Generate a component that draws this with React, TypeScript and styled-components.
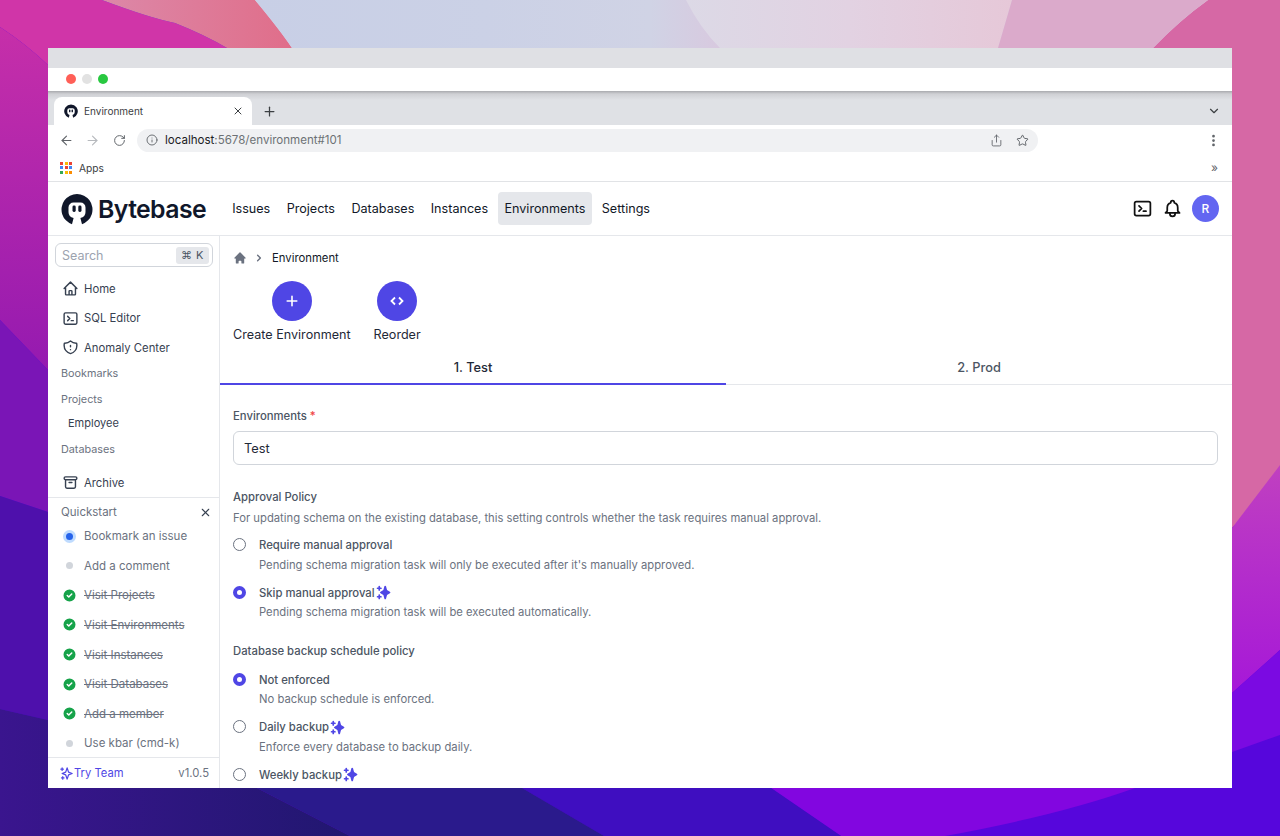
import styled, { createGlobalStyle } from "styled-components";
import {
  ArrowLeft,
  ArrowRight,
  ChevronDown,
  EllipsisVertical,
  Info,
  Plus,
  RotateCw,
  Share,
  Star,
  X,
} from "lucide-react";
import {
  HiCheckCircle,
  HiChevronRight,
  HiHome,
  HiOutlineArchive,
  HiOutlineBell,
  HiOutlineHome,
  HiOutlineShieldExclamation,
  HiOutlineSparkles,
  HiOutlineTerminal,
  HiPlus,
  HiSparkles,
} from "react-icons/hi";

const GlobalStyle = createGlobalStyle`
  html, body {
    margin: 0;
    padding: 0;
    background: #3a1590;
  }
  * {
    box-sizing: border-box;
  }
  body {
    font-family: Inter, "Noto Sans", sans-serif;
    -webkit-font-smoothing: antialiased;
  }
`;

const Wallpaper = () => (
  <WallpaperSvg viewBox="0 0 1280 836" preserveAspectRatio="none">
    <defs>
      <linearGradient id="sky" x1="0" y1="0" x2="1" y2="0">
        <stop offset="0" stopColor="#c8cfe6" />
        <stop offset="0.5" stopColor="#cbd1e6" />
        <stop offset="0.85" stopColor="#d0d3e5" />
        <stop offset="1" stopColor="#d8c9df" />
      </linearGradient>
      <linearGradient id="lilac" x1="0" y1="0" x2="1" y2="0">
        <stop offset="0" stopColor="#dcd9e6" />
        <stop offset="0.5" stopColor="#e2d2e2" />
        <stop offset="1" stopColor="#e6c8d8" />
      </linearGradient>
      <linearGradient id="salmon" x1="0" y1="0" x2="1" y2="0">
        <stop offset="0" stopColor="#dc88a8" />
        <stop offset="1" stopColor="#e06e8a" />
      </linearGradient>
      <linearGradient id="leftTop" x1="0" y1="0" x2="0" y2="1">
        <stop offset="0" stopColor="#c62fa9" />
        <stop offset="1" stopColor="#951ab0" />
      </linearGradient>
      <linearGradient id="bottomLeft" x1="0" y1="0" x2="1" y2="0">
        <stop offset="0" stopColor="#3a158e" />
        <stop offset="1" stopColor="#211770" />
      </linearGradient>
      <linearGradient id="rightMag" x1="0" y1="0" x2="0" y2="1">
        <stop offset="0" stopColor="#c040c0" />
        <stop offset="1" stopColor="#a618d8" />
      </linearGradient>
    </defs>
    <rect width="1280" height="836" fill="#5606dc" />
    <rect x="250" width="970" height="48" fill="#d9cde2" />
    <path d="M1153 48Q1180 20 1208 0H1280V480L1232 528V48Z" fill="#d668a5" />
    <path d="M1232 528L1280 465V650L1232 693Z" fill="url(#rightMag)" />
    <path d="M1232 693L1280 650V735L1232 752Z" fill="#7b0ae2" />
    <path d="M771 788L841 836H945Q1060 815 1135 788Z" fill="#8206e0" />
    <path d="M522 788L604 836H841L771 788Z" fill="#3f0ec0" />
    <path d="M257 788L350 836H604L522 788Z" fill="#2a1a8c" />
    <path d="M0 27Q26 44 48 65V370L0 320Z" fill="url(#leftTop)" />
    <path d="M0 0H102Q150 18 175 23Q205 35 227 48H48V65Q26 44 0 27Z" fill="#d035a8" />
    <path d="M102 0H255Q280 30 292 48H227Q205 35 175 23Q150 18 102 0Z" fill="url(#salmon)" />
    <path d="M0 320L48 370V512L0 496Z" fill="#7a15b6" />
    <path d="M0 496L48 512V720L0 709Z" fill="#4e10ac" />
    <path d="M0 709L48 720V788H257L350 836H0Z" fill="url(#bottomLeft)" />
    <path d="M255 0H686Q700 28 720 48H292Q280 30 255 0Z" fill="url(#sky)" />
    <path d="M686 0H1012L998 48H720Q700 28 686 0Z" fill="url(#lilac)" />
    <path d="M1012 0H1208Q1180 20 1153 48H998Z" fill="#dbaacb" />
  </WallpaperSvg>
);

const Logo = ({ size, withText }: { size: number; withText?: boolean }) => (
  <LogoRow>
    <svg width={size} height={size} viewBox="0 0 32 32">
      <path
        d="M11 31.2A15.5 15.5 0 1 1 21 31.2L19.4 25A6 6 0 0 0 24.5 19V14.5A5 5 0 0 0 19.5 9.5H12.5A5 5 0 0 0 7.5 14.5V19A6 6 0 0 0 12.6 25Z"
        fill="#10172a"
      />
      <rect x="11.5" y="12.5" width="3.2" height="6.5" rx="1.4" fill="#10172a" />
      <rect x="17.3" y="12.5" width="3.2" height="6.5" rx="1.4" fill="#10172a" />
    </svg>
    {withText && <LogoText>Bytebase</LogoText>}
  </LogoRow>
);

const navItems = ["Issues", "Projects", "Databases", "Instances", "Environments", "Settings"];

const quickstart = [
  { label: "Bookmark an issue", state: "current" },
  { label: "Add a comment", state: "todo" },
  { label: "Visit Projects", state: "done" },
  { label: "Visit Environments", state: "done" },
  { label: "Visit Instances", state: "done" },
  { label: "Visit Databases", state: "done" },
  { label: "Add a member", state: "done" },
  { label: "Use kbar (cmd-k)", state: "todo" },
];

const appColors = ["#ea4335", "#fbbc05", "#ea4335", "#4285f4", "#ea4335", "#4285f4", "#34a853", "#fbbc05", "#fb8c00"];

const Option = ({
  title,
  hint,
  checked,
  premium,
}: {
  title: string;
  hint?: string;
  checked?: boolean;
  premium?: boolean;
}) => (
  <OptionRow>
    <Radio $checked={checked} />
    <div>
      <OptionTitle>
        {title}
        {premium && <Sparkle />}
      </OptionTitle>
      {hint && <OptionHint>{hint}</OptionHint>}
    </div>
  </OptionRow>
);

export default function App() {
  return (
    <Screen>
      <GlobalStyle />
      <Wallpaper />
      <Window>
        <TopStrip />
        <TitleBar>
          <Light $color="#ff5f57" />
          <Light $color="#e2e2e2" />
          <Light $color="#28c840" />
        </TitleBar>
        <TabStrip>
          <Tab>
            <Logo size={14} />
            <TabTitle>Environment</TabTitle>
            <X size={12} strokeWidth={2} color="#3c4043" />
          </Tab>
          <NewTab>
            <Plus size={15} strokeWidth={2} />
          </NewTab>
          <TabMenu>
            <ChevronDown size={14} strokeWidth={2} />
          </TabMenu>
        </TabStrip>
        <Toolbar>
          <ArrowLeft size={15} strokeWidth={1.8} color="#5f6368" />
          <ArrowRight size={15} strokeWidth={1.8} color="#b6b9bd" />
          <RotateCw size={13} strokeWidth={1.8} color="#5f6368" />
          <Omnibox>
            <Info size={12} strokeWidth={1.8} color="#5f6368" />
            <Url>
              <strong>localhost</strong>:5678/environment#101
            </Url>
            <OmniIcons>
              <Share size={13} strokeWidth={1.6} color="#5f6368" />
              <Star size={13} strokeWidth={1.8} color="#5f6368" />
            </OmniIcons>
          </Omnibox>
          <EllipsisVertical size={15} strokeWidth={2.4} color="#5f6368" />
        </Toolbar>
        <BookmarksBar>
          <AppsGrid>
            {appColors.map((c, i) => (
              <AppsDot key={i} $color={c} />
            ))}
          </AppsGrid>
          <AppsLabel>Apps</AppsLabel>
          <More>»</More>
        </BookmarksBar>

        <Header>
          <Logo size={32} withText />
          <Nav>
            {navItems.map((item) => (
              <NavItem key={item} $active={item === "Environments"}>
                {item}
              </NavItem>
            ))}
          </Nav>
          <HeaderRight>
            <HiOutlineTerminal size={21} color="#111" />
            <HiOutlineBell size={21} color="#111" />
            <Avatar>R</Avatar>
          </HeaderRight>
        </Header>

        <Body>
          <Sidebar>
            <SideTop>
              <SearchBox>
                Search
                <Kbd>⌘ K</Kbd>
              </SearchBox>
              <SideLink>
                <HiOutlineHome size={17} />
                Home
              </SideLink>
              <SideLink>
                <HiOutlineTerminal size={17} />
                SQL Editor
              </SideLink>
              <SideLink>
                <HiOutlineShieldExclamation size={17} />
                Anomaly Center
              </SideLink>
              <SideHeading>Bookmarks</SideHeading>
              <SideHeading>Projects</SideHeading>
              <SideChild>Employee</SideChild>
              <SideHeading>Databases</SideHeading>
              <ArchiveLink>
                <HiOutlineArchive size={17} />
                Archive
              </ArchiveLink>
            </SideTop>
            <Quickstart>
              <QuickHead>
                Quickstart
                <X size={13} strokeWidth={2} color="#374151" />
              </QuickHead>
              {quickstart.map(({ label, state }) => (
                <QuickItem key={label} $done={state === "done"}>
                  <QuickMark>
                    {state === "done" && <HiCheckCircle size={17} color="#16a34a" />}
                    {state === "current" && <CurrentDot />}
                    {state === "todo" && <TodoDot />}
                  </QuickMark>
                  {label}
                </QuickItem>
              ))}
            </Quickstart>
            <SideFooter>
              <TryTeam>
                <HiOutlineSparkles size={15} />
                Try Team
              </TryTeam>
              <Version>v1.0.5</Version>
            </SideFooter>
          </Sidebar>

          <Main>
            <Breadcrumb>
              <HiHome size={14} color="#6b7280" />
              <HiChevronRight size={14} color="#6b7280" />
              <span>Environment</span>
            </Breadcrumb>
            <Actions>
              <Action>
                <ActionCircle>
                  <HiPlus size={16} />
                </ActionCircle>
                Create Environment
              </Action>
              <Action>
                <ActionCircle>
                  <svg width="16" height="16" viewBox="0 0 16 16" fill="none" stroke="currentColor" strokeWidth="1.8">
                    <path d="M6 4.5L2.5 8L6 11.5" />
                    <path d="M10 4.5L13.5 8L10 11.5" />
                  </svg>
                </ActionCircle>
                Reorder
              </Action>
            </Actions>
            <Tabs>
              <TabItem $active>1. Test</TabItem>
              <TabItem>2. Prod</TabItem>
            </Tabs>
            <Form>
              <FieldLabel>
                Environments <Required>*</Required>
              </FieldLabel>
              <TextInput>Test</TextInput>

              <SectionTitle>Approval Policy</SectionTitle>
              <SectionText>
                For updating schema on the existing database, this setting controls whether the task requires manual
                approval.
              </SectionText>
              <Options>
                <Option
                  title="Require manual approval"
                  hint="Pending schema migration task will only be executed after it's manually approved."
                />
                <Option
                  title="Skip manual approval"
                  hint="Pending schema migration task will be executed automatically."
                  checked
                  premium
                />
              </Options>

              <BackupTitle>Database backup schedule policy</BackupTitle>
              <BackupOptions>
                <Option title="Not enforced" hint="No backup schedule is enforced." checked />
                <Option title="Daily backup" hint="Enforce every database to backup daily." premium />
                <Option title="Weekly backup" premium />
              </BackupOptions>
            </Form>
          </Main>
        </Body>
      </Window>
    </Screen>
  );
}

const Sparkle = () => (
  <SparkleIcon>
    <HiSparkles size={17} />
  </SparkleIcon>
);

const Screen = styled.div`
  position: relative;
  width: 1280px;
  height: 836px;
  padding: 48px;
  overflow: hidden;
`;

const WallpaperSvg = styled.svg`
  position: absolute;
  inset: 0;
  width: 1280px;
  height: 836px;
`;

const Window = styled.div`
  position: relative;
  display: flex;
  flex-direction: column;
  height: 740px;
  background: #fff;
  overflow: hidden;
`;

const TopStrip = styled.div`
  flex: none;
  height: 20px;
  background: #dfe0e4;
`;

const TitleBar = styled.div`
  display: flex;
  flex: none;
  align-items: center;
  gap: 6px;
  height: 23px;
  padding: 0 0 1px 18px;
  background: #fff;
`;

const Light = styled.span<{ $color: string }>`
  width: 10px;
  height: 10px;
  border-radius: 50%;
  background: ${({ $color }) => $color};
`;

const TabStrip = styled.div`
  display: flex;
  flex: none;
  align-items: flex-end;
  height: 34px;
  padding-left: 6px;
  background: linear-gradient(#a9aaae 0, #cfd0d4 3px, #dfe1e5 9px);
`;

const Tab = styled.div`
  display: flex;
  align-items: center;
  width: 198px;
  height: 28px;
  padding: 0 8px 0 10px;
  border-radius: 8px 8px 0 0;
  background: #fff;
`;

const TabTitle = styled.span`
  flex: 1;
  margin-left: 6px;
  font-size: 10px;
  color: #3c4043;
`;

const NewTab = styled.div`
  display: flex;
  align-items: center;
  height: 28px;
  margin-left: 10px;
  color: #3c4043;
`;

const TabMenu = styled.div`
  display: flex;
  align-items: center;
  height: 28px;
  margin-left: auto;
  margin-right: 11px;
  color: #3c4043;
`;

const Toolbar = styled.div`
  display: flex;
  flex: none;
  align-items: center;
  height: 28px;
  padding: 2px 11px 0 11px;
  background: #fff;

  > svg:nth-child(2) {
    margin-left: 11px;
  }
  > svg:nth-child(3) {
    margin-left: 13px;
  }
  > svg:last-child {
    margin-left: auto;
  }
`;

const Omnibox = styled.div`
  display: flex;
  flex: none;
  align-items: center;
  width: 901px;
  height: 23px;
  margin-left: 11px;
  padding: 0 9px;
  border-radius: 12px;
  background: #f0f1f3;
`;

const Url = styled.span`
  margin-left: 7px;
  font-size: 11.55px;
  color: #6d7175;

  strong {
    font-weight: 400;
    color: #202124;
  }
`;

const OmniIcons = styled.div`
  display: flex;
  align-items: center;
  gap: 13px;
  margin-left: auto;
`;

const BookmarksBar = styled.div`
  display: flex;
  flex: none;
  align-items: center;
  height: 29px;
  padding: 1px 14px 0 12px;
  border-bottom: 1px solid #e1e3e6;
  background: #fff;
`;

const AppsGrid = styled.div`
  display: grid;
  grid-template-columns: repeat(3, 3px);
  grid-auto-rows: 3px;
  gap: 1.5px;
`;

const AppsDot = styled.span<{ $color: string }>`
  background: ${({ $color }) => $color};
`;

const AppsLabel = styled.span`
  margin-left: 7px;
  font-size: 10.2px;
  color: #3c4043;
`;

const More = styled.span`
  margin-left: auto;
  font-size: 12px;
  color: #5f6368;
`;

const Header = styled.header`
  display: flex;
  flex: none;
  align-items: center;
  height: 54px;
  padding: 0 13px;
  border-bottom: 1px solid #e5e7eb;
`;

const LogoRow = styled.div`
  display: flex;
  flex: none;
  align-items: center;
  gap: 5px;
`;

const LogoText = styled.span`
  font-size: 24.8px;
  font-weight: 600;
  letter-spacing: -0.6px;
  color: #10172a;
`;

const Nav = styled.nav`
  display: flex;
  gap: 4px;
  margin-left: 20px;
`;

const NavItem = styled.a<{ $active?: boolean }>`
  padding: 8px 6.2px;
  border-radius: 4px;
  font-size: 12.6px;
  line-height: 17px;
  color: #111827;
  background: ${({ $active }) => ($active ? "#e5e7eb" : "transparent")};
`;

const HeaderRight = styled.div`
  display: flex;
  align-items: center;
  gap: 9px;
  margin-left: auto;
`;

const Avatar = styled.div`
  display: flex;
  align-items: center;
  justify-content: center;
  width: 27px;
  height: 27px;
  border-radius: 50%;
  font-size: 12px;
  font-weight: 500;
  color: #fff;
  background: #6366f1;
`;

const Body = styled.div`
  display: flex;
  flex: 1;
  min-height: 0;
`;

const Sidebar = styled.aside`
  display: flex;
  flex: none;
  flex-direction: column;
  width: 172px;
  border-right: 1px solid #e5e7eb;
`;

const SideTop = styled.div`
  flex: none;
  height: 262px;
  padding: 7px 6px 0 7px;
  border-bottom: 1px solid #e5e7eb;
`;

const SearchBox = styled.div`
  display: flex;
  align-items: center;
  justify-content: space-between;
  height: 24px;
  margin-bottom: 7px;
  padding: 0 3px 0 6px;
  border: 1px solid #d1d5db;
  border-radius: 6px;
  font-size: 12.5px;
  color: #9ca3af;
`;

const Kbd = styled.span`
  padding: 1px 5px;
  border-radius: 3px;
  font-size: 11px;
  line-height: 15px;
  letter-spacing: 0.5px;
  color: #4b5563;
  background: #e5e7eb;
`;

const SideLink = styled.div`
  display: flex;
  align-items: center;
  gap: 5px;
  height: 29.6px;
  padding-left: 7px;
  font-size: 11.3px;
  color: #374151;

  svg {
    flex: none;
  }
`;

const ArchiveLink = styled(SideLink)`
  margin-top: 3px;
`;

const SideHeading = styled.div`
  height: 26px;
  padding: 2px 0 0 6px;
  font-size: 10.8px;
  line-height: 18px;
  color: #6b7280;
`;

const SideChild = styled.div`
  height: 24px;
  padding: 0 0 0 13px;
  font-size: 11px;
  line-height: 16px;
  color: #374151;
`;

const Quickstart = styled.div`
  flex: none;
  height: 260px;
  padding: 5.4px 7px 0;
  border-bottom: 1px solid #e5e7eb;
`;

const QuickHead = styled.div`
  display: flex;
  align-items: center;
  justify-content: space-between;
  height: 18px;
  padding: 0 0 0 6px;
  font-size: 11.5px;
  color: #6b7280;
`;

const QuickItem = styled.div<{ $done?: boolean }>`
  display: flex;
  align-items: center;
  gap: 7px;
  height: 29.6px;
  padding-left: 7px;
  font-size: 11.5px;
  color: #6b7280;
  text-decoration: ${({ $done }) => ($done ? "line-through" : "none")};
`;

const QuickMark = styled.span`
  display: flex;
  flex: none;
  align-items: center;
  justify-content: center;
  width: 15px;
`;

const CurrentDot = styled.span`
  width: 13px;
  height: 13px;
  border-radius: 50%;
  border: 3px solid #bfdbfe;
  background: #2563eb;
`;

const TodoDot = styled.span`
  width: 7px;
  height: 7px;
  border-radius: 50%;
  background: #d1d5db;
`;

const SideFooter = styled.div`
  display: flex;
  align-items: center;
  justify-content: space-between;
  flex: 1;
  padding: 0 10px 0 11px;
`;

const TryTeam = styled.div`
  display: flex;
  align-items: center;
  font-size: 11.2px;
  color: #4f46e5;
`;

const Version = styled.span`
  font-size: 11.3px;
  color: #6b7280;
`;

const Main = styled.main`
  flex: 1;
  min-width: 0;
`;

const Breadcrumb = styled.div`
  display: flex;
  align-items: center;
  gap: 5px;
  height: 17px;
  margin: 13px 0 0 13px;
  font-size: 11.3px;
  color: #111827;

  span {
    margin-left: 1px;
  }
`;

const Actions = styled.div`
  display: flex;
  gap: 23px;
  margin: 15px 0 0 13px;
`;

const Action = styled.div`
  display: flex;
  flex-direction: column;
  align-items: center;
  gap: 5px;
  font-size: 12.6px;
  line-height: 17px;
  color: #1f2937;
`;

const ActionCircle = styled.div`
  display: flex;
  align-items: center;
  justify-content: center;
  width: 40px;
  height: 40px;
  border-radius: 50%;
  color: #fff;
  background: #4f46e5;
`;

const Tabs = styled.div`
  display: flex;
  margin-top: 8px;
  border-bottom: 1px solid #e5e7eb;
`;

const TabItem = styled.div<{ $active?: boolean }>`
  flex: 1;
  height: 34px;
  padding-top: 8px;
  margin-bottom: -1px;
  border-bottom: 2px solid ${({ $active }) => ($active ? "#4f46e5" : "transparent")};
  font-size: 12.8px;
  font-weight: 500;
  line-height: 18px;
  text-align: center;
  color: ${({ $active }) => ($active ? "#1f2937" : "#4b5563")};
`;

const Form = styled.div`
  padding: 23px 14px 0 13px;
`;

const FieldLabel = styled.div`
  font-size: 11.3px;
  font-weight: 500;
  line-height: 16px;
  color: #4b5563;
`;

const Required = styled.span`
  color: #ef4444;
`;

const TextInput = styled.div`
  display: flex;
  align-items: center;
  height: 34px;
  margin-top: 7px;
  padding: 0 10px;
  border: 1px solid #d1d5db;
  border-radius: 6px;
  font-size: 12.8px;
  color: #1f2937;
`;

const SectionTitle = styled.div`
  margin-top: 24px;
  font-size: 11.3px;
  font-weight: 500;
  line-height: 16px;
  color: #4b5563;
`;

const SectionText = styled.div`
  margin-top: 5px;
  font-size: 11.25px;
  line-height: 16px;
  color: #6b7280;
`;

const Options = styled.div`
  display: flex;
  flex-direction: column;
  gap: 12px;
  margin-top: 11px;
`;

const BackupTitle = styled(SectionTitle)`
  margin-top: 22.5px;
`;

const BackupOptions = styled(Options)`
  margin-top: 13px;
`;

const OptionRow = styled.div`
  display: flex;
  align-items: flex-start;
  gap: 13px;
`;

const Radio = styled.span<{ $checked?: boolean }>`
  flex: none;
  width: 13px;
  height: 13px;
  margin-top: 1px;
  border-radius: 50%;
  border: ${({ $checked }) => ($checked ? "4px solid #4f46e5" : "1px solid #6b7280")};
  background: #fff;
`;

const OptionTitle = styled.div`
  display: flex;
  align-items: center;
  height: 16px;
  font-size: 11.3px;
  font-weight: 500;
  color: #4b5563;
`;

const OptionHint = styled.div`
  margin-top: 3.5px;
  font-size: 11.25px;
  line-height: 16px;
  color: #6b7280;
`;

const SparkleIcon = styled.span`
  display: inline-flex;
  color: #4f46e5;
`;
